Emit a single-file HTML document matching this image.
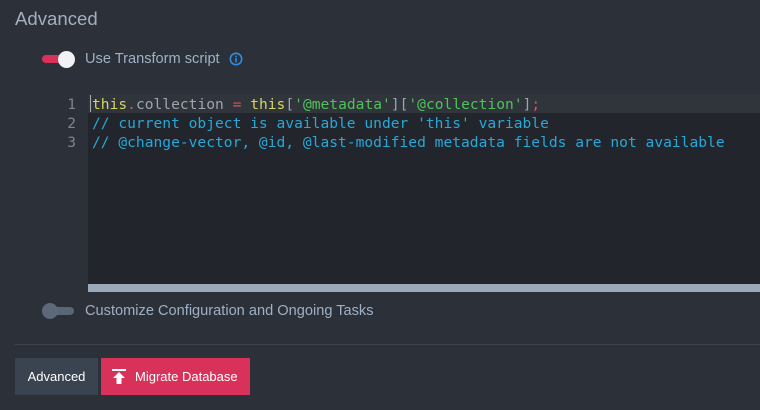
<!DOCTYPE html><html><head><style>
body{margin:0;width:760px;height:410px;background:#2c3139;font-family:"Liberation Sans",sans-serif;overflow:hidden;position:relative}
.a{position:absolute}
.code{font-family:"DejaVu Sans Mono",monospace;font-size:14.6px;line-height:19px;white-space:pre}
</style></head><body>
<div class="a" style="left:15px;top:8px;font-size:18.6px;color:#a4afbd">Advanced</div>
<div class="a" style="left:42px;top:55px;width:30px;height:8px;border-radius:4px;background:#d9325a"></div>
<div class="a" style="left:58px;top:51px;width:17px;height:17px;border-radius:50%;background:#f0f2f5"></div>
<div class="a" style="left:85px;top:51px;font-size:14.6px;color:#9fb0c4">Use Transform script</div>
<svg class="a" style="left:229px;top:52px" width="14" height="14"><circle cx="7" cy="7" r="5.7" fill="none" stroke="#2f8de4" stroke-width="1.6"/><rect x="6.2" y="6" width="1.6" height="4.3" fill="#2f8de4"/><rect x="6.2" y="3.6" width="1.6" height="1.6" fill="#2f8de4"/></svg>
<div class="a" style="left:88px;top:94px;width:672px;height:19px;background:#30343b"></div>
<div class="a" style="left:88px;top:113px;width:672px;height:171px;background:#22252c"></div>
<div class="a" style="left:88px;top:284px;width:672px;height:8px;background:#9aa8b8"></div>
<div class="a" style="left:90px;top:95px;width:1px;height:17px;background:#aaa"></div>
<div class="a code" style="left:62px;top:95px;color:#7a8594;text-align:right;width:14px">1
2
3</div>
<div class="a code" style="left:92px;top:95px;color:#9aa6b4"><span style="color:#d6d65a">this</span><span style="color:#e0506a">.</span>collection <span style="color:#e0506a">=</span> <span style="color:#d6d65a">this</span>[<span style="color:#4fc35a">'@metadata'</span>][<span style="color:#4fc35a">'@collection'</span>]<span style="color:#e0506a">;</span>
<span style="color:#28a8d8">// current object is available under 'this' variable
// @change-vector, @id, @last-modified metadata fields are not available</span></div>
<div class="a" style="left:42px;top:307px;width:32px;height:8px;border-radius:4px;background:#5a6575"></div>
<div class="a" style="left:42px;top:303px;width:16px;height:16px;border-radius:50%;background:#5d687a"></div>
<div class="a" style="left:85px;top:303px;font-size:14.6px;color:#9fb0c4">Customize Configuration and Ongoing Tasks</div>
<div class="a" style="left:15px;top:344px;width:745px;height:1px;background:#3c434d"></div>
<div class="a" style="left:15px;top:358px;width:83px;height:37px;background:#3a4350;color:#fff;font-size:13px;line-height:37px;text-align:center">Advanced</div>
<div class="a" style="left:101px;top:358px;width:149px;height:37px;background:#d9325a;color:#fff;font-size:13px;line-height:37px"><svg style="position:absolute;left:11px;top:11px" width="14" height="15"><rect x="0" y="0" width="14" height="2" fill="#fff"/><path d="M7 3L1 9H4.5V15H9.5V9H13Z" fill="#fff"/></svg><span style="position:absolute;left:34px">Migrate Database</span></div>
</body></html>
